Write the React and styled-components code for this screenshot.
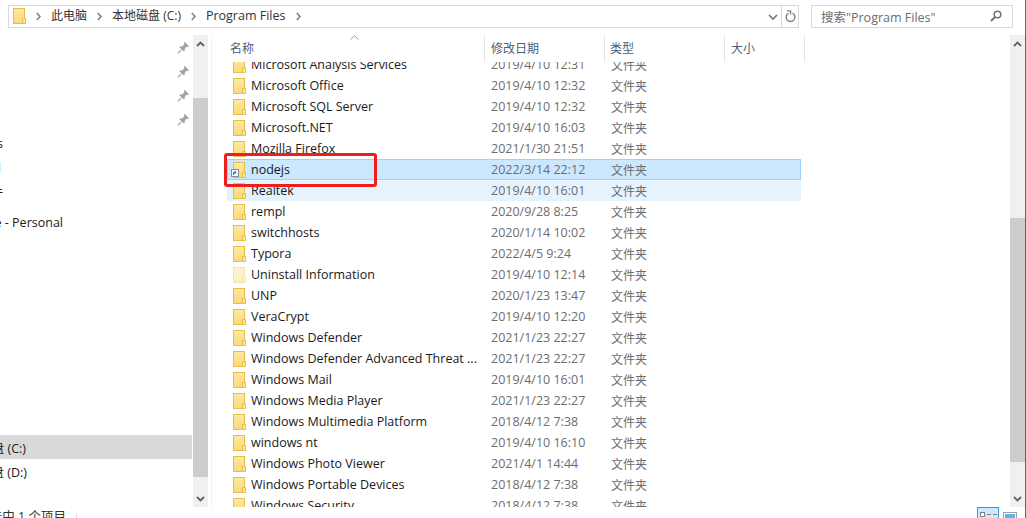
import React from "react";
import styled, { createGlobalStyle } from "styled-components";

const Global = createGlobalStyle`
  html, body { margin: 0; padding: 0; background: #fff; }
  * { box-sizing: border-box; }
`;

const FONT = `"Open Sans", "Noto Sans CJK SC", sans-serif`;

const Window = styled.div`
  width: 1026px; height: 518px; overflow: hidden; display: flex; flex-direction: column;
  background: #fff; border-right: 1px solid #1979ca;
  font: 12.5px ${FONT}; color: #1a1a1a;
`;
const Toolbar = styled.div`
  height: 35px; flex: none; display: flex; gap: 12px; padding: 5px 0 0 8px;
`;
const AddressBar = styled.div`
  width: 791px; height: 23px; border: 1px solid #d9d9d9; display: flex; align-items: center; padding-left: 4px;
`;
const Crumbs = styled.div`
  flex: 1; display: flex; align-items: center; gap: 10px; min-width: 0; padding-bottom: 1px;
`;
const CrumbText = styled.span`
  color: #333; white-space: nowrap; line-height: 20px; font-size: ${p => p.$size || 12.5}px;
`;
const AddressTool = styled.div`
  flex: none; height: 100%; width: ${p => p.$w}px; display: flex; align-items: center; justify-content: center;
  border-left: ${p => (p.$divided ? "1px solid #d9d9d9" : "none")};
`;
const SearchBox = styled.div`
  width: 202px; height: 23px; border: 1px solid #d9d9d9; display: flex; align-items: center;
  justify-content: space-between; padding: 0 10px 1px 9px; color: #6d6d6d;
`;
const Main = styled.div`
  flex: 1; min-height: 0; display: flex;
`;
const Nav = styled.div`
  width: 192px; flex: none; overflow: hidden; display: flex; flex-direction: column; margin-right: 1px;
`;
const NavRow = styled.div`
  height: 24px; flex: none; display: flex; align-items: center; justify-content: space-between;
  padding-right: 2px; margin-top: ${p => p.$gap || 0}px;
  background: ${p => (p.$active ? "#d9d9d9" : "transparent")};
`;
const NavLabel = styled.div`
  width: ${p => p.$end}px; display: flex; justify-content: flex-end; white-space: nowrap; flex: none;
`;
const Track = styled.div`
  width: 15px; flex: none; background: #f0f0f0; display: flex; flex-direction: column;
`;
const ArrowCell = styled.div`
  height: 17px; flex: none; display: flex; align-items: center; justify-content: center; padding-top: 1px;
`;
const Thumb = styled.div`
  flex: none; background: #cdcdcd; margin-top: ${p => p.$top}px; height: ${p => p.$h}px;
`;
const TrackEnd = styled(ArrowCell)`
  margin-top: auto; padding-top: 0;
`;
const Pane = styled.div`
  flex: 1; min-width: 0; margin-left: 3px; border-left: 1px solid #f2f2f2; display: flex; flex-direction: column; position: relative;
`;
const HeaderRow = styled.div`
  height: 27px; flex: none; display: flex; padding-left: 15px; position: relative;
`;
const HeaderCell = styled.div`
  width: ${p => p.$w}px; flex: none; height: 27px; border-right: 1px solid #e5e5e5; padding-left: ${p => p.$pad}px;
  color: #4c607a; line-height: 28px; font-size: 12px;
`;
const SortMark = styled.svg`
  position: absolute; left: 138px; top: 0;
`;
const Rows = styled.div`
  flex: 1; min-height: 0; overflow: hidden;
`;
const RowList = styled.div`
  margin: -8px 0 0 15px; width: 574px;
`;
const Row = styled.div`
  height: 21px; display: grid; grid-template-columns: 24px 240px 120px 1fr; align-items: center;
  background: ${p => (p.$state === "selected" ? "#cce8ff" : p.$state === "hover" ? "#e5f3ff" : "transparent")};
  box-shadow: ${p => (p.$state === "selected" ? "inset 0 0 0 1px #99d1ff" : "none")};
`;
const IconCell = styled.div`
  padding-left: 6px; height: 21px; display: flex; align-items: center; position: relative;
`;
const Name = styled.div`
  white-space: nowrap; color: #1a1a1a; line-height: 21px;
`;
const Meta = styled.div`
  color: #6d6d6d; white-space: nowrap; line-height: 21px;
`;
const KindMeta = styled(Meta)`
  font-size: 12px; height: 21px; padding-top: 1px;
`;
const Highlight = styled.div`
  position: absolute; left: 12px; top: 118px; width: 153px; height: 34px; border: 3px solid #f01d1d; border-radius: 3px; pointer-events: none;
`;
const StatusBar = styled.div`
  height: 11px; flex: none; display: flex; overflow: hidden; padding-right: 8px;
`;
const StatusText = styled.div`
  width: 66px; flex: none; display: flex; justify-content: flex-end; white-space: nowrap; color: #333; line-height: 19px;
`;
const StatusDivider = styled.div`
  width: 1px; height: 6px; background: #e0e0e0; margin: 6px 0 0 10px;
`;
const ViewButtons = styled.div`
  margin-left: auto; display: flex; gap: 4px;
`;
const ViewButton = styled.div`
  width: ${p => p.$w}px; height: 22px; display: flex; justify-content: center;
  padding-top: ${p => (p.$active ? 4 : 5)}px;
  border: ${p => (p.$active ? "1px solid #26a0da" : "none")};
  background: ${p => (p.$active ? "#cce8ff" : "transparent")};
`;
const Shortcut = styled.svg`
  position: absolute; left: 4px; top: 10px;
`;

const Folder = ({ pale }) => (
  <svg width="13" height="16" viewBox="0 0 13 16" style={{ opacity: pale ? 0.45 : 1, flex: "none" }}>
    <defs>
      <linearGradient id="fg" x1="0" y1="0" x2="0" y2="1">
        <stop offset="0" stopColor="#fee9a2" />
        <stop offset="1" stopColor="#fbd976" />
      </linearGradient>
    </defs>
    <rect x="0.5" y="0.5" width="11" height="15" fill="url(#fg)" stroke="#e8be48" />
    <path d="M9.5 15.5V10.5H12.5V15.5Z" fill="#fde79c" stroke="#e8be48" />
  </svg>
);

const Chevron = ({ color = "#808080" }) => (
  <svg width="5" height="9" viewBox="0 0 5 9" style={{ flex: "none" }}>
    <path d="M0.8 1L4 4.5L0.8 8" fill="none" stroke={color} strokeWidth="1.6" />
  </svg>
);

const Pin = () => (
  <svg width="13" height="13" viewBox="0 0 13 13" style={{ flex: "none" }}>
    <path d="M7.6 0.8L12.2 5.4L11 6L9.8 5.6L7.6 7.8L7.8 9.8L6.8 10.6L2.4 6.2L3.2 5.2L5.2 5.4L7.4 3.2L7 2Z" fill="#9aa3aa" />
    <path d="M4.2 8.8L0.8 12.2" stroke="#9aa3aa" strokeWidth="1.2" />
  </svg>
);

const ArrowUp = () => (
  <svg width="9" height="6" viewBox="0 0 9 6">
    <path d="M1 5L4.5 1.5L8 5" fill="none" stroke="#606060" strokeWidth="1.8" />
  </svg>
);
const ArrowDown = () => (
  <svg width="9" height="6" viewBox="0 0 9 6">
    <path d="M1 1L4.5 4.5L8 1" fill="none" stroke="#606060" strokeWidth="1.8" />
  </svg>
);

const Scrollbar = ({ top, h }) => (
  <Track>
    <ArrowCell><ArrowUp /></ArrowCell>
    <Thumb $top={top} $h={h} />
    <TrackEnd><ArrowDown /></TrackEnd>
  </Track>
);

const files = [
  ["Microsoft Analysis Services", "2019/4/10 12:31"],
  ["Microsoft Office", "2019/4/10 12:32"],
  ["Microsoft SQL Server", "2019/4/10 12:32"],
  ["Microsoft.NET", "2019/4/10 16:03"],
  ["Mozilla Firefox", "2021/1/30 21:51"],
  ["nodejs", "2022/3/14 22:12", "selected"],
  ["Realtek", "2019/4/10 16:01", "hover"],
  ["rempl", "2020/9/28 8:25"],
  ["switchhosts", "2020/1/14 10:02"],
  ["Typora", "2022/4/5 9:24"],
  ["Uninstall Information", "2019/4/10 12:14", "pale"],
  ["UNP", "2020/1/23 13:47"],
  ["VeraCrypt", "2019/4/10 12:20"],
  ["Windows Defender", "2021/1/23 22:27"],
  ["Windows Defender Advanced Threat ...", "2021/1/23 22:27"],
  ["Windows Mail", "2019/4/10 16:01"],
  ["Windows Media Player", "2021/1/23 22:27"],
  ["Windows Multimedia Platform", "2018/4/12 7:38"],
  ["windows nt", "2019/4/10 16:10"],
  ["Windows Photo Viewer", "2021/4/1 14:44"],
  ["Windows Portable Devices", "2018/4/12 7:38"],
  ["Windows Security", "2018/4/12 7:38"],
];

const navRows = [
  { pin: true }, { pin: true }, { pin: true }, { pin: true },
  { label: "docs", end: 3 },
  { label: "Mail", end: 1 },
  { label: "文件", end: 3 },
];

export default function App() {
  return (
    <Window>
      <Global />
      <Toolbar>
        <AddressBar>
          <Crumbs>
            <Folder />
            <Chevron />
            <CrumbText $size={12}>此电脑</CrumbText>
            <Chevron />
            <CrumbText $size={12}>本地磁盘 (C:)</CrumbText>
            <Chevron />
            <CrumbText>Program Files</CrumbText>
            <Chevron />
          </Crumbs>
          <AddressTool $w={16}>
            <svg width="10" height="6" viewBox="0 0 10 6"><path d="M1 1L5 5L9 1" fill="none" stroke="#707070" strokeWidth="1.6" /></svg>
          </AddressTool>
          <AddressTool $w={17} $divided>
            <svg width="11" height="13" viewBox="0 0 11 13">
              <path d="M3.5 3.2A4.4 4.4 0 1 0 7.5 3.2" fill="none" stroke="#808080" strokeWidth="1.4" />
              <path d="M2 0.8H5.6V4.4" fill="none" stroke="#808080" strokeWidth="1.3" />
            </svg>
          </AddressTool>
        </AddressBar>
        <SearchBox>
          <span>搜索"Program Files"</span>
          <svg width="12" height="12" viewBox="0 0 12 12">
            <circle cx="7.5" cy="4.5" r="3.3" fill="none" stroke="#707070" strokeWidth="1.5" />
            <path d="M5 7L1 11" stroke="#707070" strokeWidth="1.8" />
          </svg>
        </SearchBox>
      </Toolbar>
      <Main>
        <Nav>
          {navRows.map((r, i) => (
            <NavRow key={i}>
              {r.label ? <NavLabel $end={r.end}>{r.label}</NavLabel> : <span />}
              {r.pin && <Pin />}
            </NavRow>
          ))}
          <NavRow $gap={7}><NavLabel $end={63}>OneDrive - Personal</NavLabel></NavRow>
          <NavRow $gap={201} $active><NavLabel $end={26}>本地磁盘 (C:)</NavLabel></NavRow>
          <NavRow><NavLabel $end={27}>本地磁盘 (D:)</NavLabel></NavRow>
        </Nav>
        <Scrollbar top={46} h={379} />
        <Pane>
          <HeaderRow>
            <HeaderCell $w={258} $pad={3}>名称</HeaderCell>
            <HeaderCell $w={120} $pad={6}>修改日期</HeaderCell>
            <HeaderCell $w={120} $pad={5}>类型</HeaderCell>
            <HeaderCell $w={80} $pad={6}>大小</HeaderCell>
            <SortMark width="9" height="5" viewBox="0 0 9 5">
              <path d="M0.5 4.5L4.5 0.8L8.5 4.5" fill="none" stroke="#9a9a9a" strokeWidth="1" />
            </SortMark>
          </HeaderRow>
          <Rows>
            <RowList>
              {files.map(([name, date, state]) => (
                <Row key={name} $state={state}>
                  <IconCell>
                    <Folder pale={state === "pale"} />
                    {state === "selected" && (
                      <Shortcut width="8" height="8" viewBox="0 0 8 8">
                        <rect x="0.5" y="0.5" width="7" height="7" fill="#fff" stroke="#8a8a8a" />
                        <path d="M2.5 5.8V3.4H5M3.4 2L5.2 3.4L3.4 4.8" fill="none" stroke="#2a5db0" strokeWidth="1" />
                      </Shortcut>
                    )}
                  </IconCell>
                  <Name>{name}</Name>
                  <Meta>{date}</Meta>
                  <KindMeta>文件夹</KindMeta>
                </Row>
              ))}
            </RowList>
          </Rows>
          <Highlight />
        </Pane>
        <Scrollbar top={166} h={244} />
      </Main>
      <StatusBar>
        <StatusText>选中 1 个项目</StatusText>
        <StatusDivider />
        <ViewButtons>
          <ViewButton $active $w={22}>
            <svg width="17" height="12" viewBox="0 0 17 12" style={{ flex: "none" }}>
              <rect x="0.5" y="0.5" width="4" height="4" fill="#fff" stroke="#808080" />
              <rect x="0.5" y="6.5" width="4" height="4" fill="#fff" stroke="#808080" />
              <path d="M7 2.5H11M13 2.5H17M7 8.5H11M13 8.5H17" stroke="#808080" />
            </svg>
          </ViewButton>
          <ViewButton $w={14}>
            <svg width="14" height="12" viewBox="0 0 14 12" style={{ flex: "none" }}>
              <rect x="0.5" y="0.5" width="13" height="11" fill="#fff" stroke="#a0a0a0" />
              <rect x="2" y="2" width="10" height="4" fill="#5fb4ea" />
            </svg>
          </ViewButton>
        </ViewButtons>
      </StatusBar>
    </Window>
  );
}
